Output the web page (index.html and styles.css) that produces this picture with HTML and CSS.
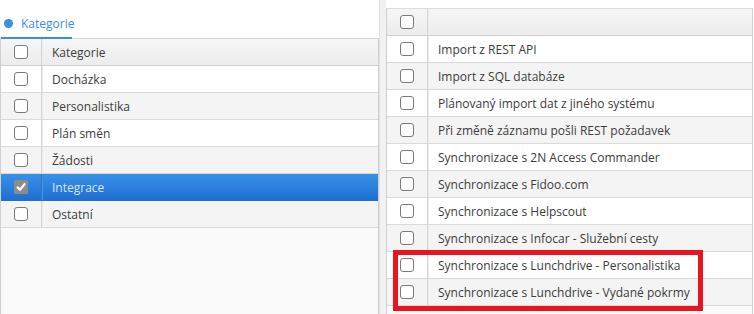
FILE: index.html
```html
<!DOCTYPE html>
<html lang="cs">
<head>
<meta charset="utf-8">
<link rel="stylesheet" href="styles.css">
</head>
<body>
<div class="layout">
  <section class="left">
    <div class="tabs">
      <div class="tab"><span class="dot"></span>Kategorie</div>
    </div>
    <div class="grid">
      <div class="row head"><div class="cb"><span class="box"></span></div><div class="txt">Kategorie</div></div>
      <div class="row"><div class="cb"><span class="box"></span></div><div class="txt">Docházka</div></div>
      <div class="row alt"><div class="cb"><span class="box"></span></div><div class="txt">Personalistika</div></div>
      <div class="row"><div class="cb"><span class="box"></span></div><div class="txt">Plán směn</div></div>
      <div class="row alt"><div class="cb"><span class="box"></span></div><div class="txt">Žádosti</div></div>
      <div class="row sel"><div class="cb"><span class="box checked"><svg viewBox="0 0 12 12" width="12" height="12"><path d="M2.6 6.4 L5 8.8 L9.6 3.2" fill="none" stroke="#fff" stroke-width="2.2" stroke-linecap="round" stroke-linejoin="round"/></svg></span></div><div class="txt">Integrace</div></div>
      <div class="row alt"><div class="cb"><span class="box"></span></div><div class="txt">Ostatní</div></div>
    </div>
  </section>
  <div class="splitter"></div>
  <section class="right">
    <div class="grid rgrid">
      <div class="row head"><div class="cb"><span class="box"></span></div><div class="txt"></div></div>
      <div class="row"><div class="cb"><span class="box"></span></div><div class="txt">Import z REST API</div></div>
      <div class="row alt"><div class="cb"><span class="box"></span></div><div class="txt">Import z SQL databáze</div></div>
      <div class="row"><div class="cb"><span class="box"></span></div><div class="txt">Plánovaný import dat z jiného systému</div></div>
      <div class="row alt"><div class="cb"><span class="box"></span></div><div class="txt">Při změně záznamu pošli REST požadavek</div></div>
      <div class="row"><div class="cb"><span class="box"></span></div><div class="txt">Synchronizace s 2N Access Commander</div></div>
      <div class="row alt"><div class="cb"><span class="box"></span></div><div class="txt">Synchronizace s Fidoo.com</div></div>
      <div class="row"><div class="cb"><span class="box"></span></div><div class="txt">Synchronizace s Helpscout</div></div>
      <div class="row alt"><div class="cb"><span class="box"></span></div><div class="txt">Synchronizace s Infocar - Služební cesty</div></div>
      <div class="row"><div class="cb"><span class="box"></span></div><div class="txt">Synchronizace s Lunchdrive - Personalistika</div></div>
      <div class="row alt"><div class="cb"><span class="box"></span></div><div class="txt">Synchronizace s Lunchdrive - Vydané pokrmy</div></div>
      <div class="highlight"></div>
    </div>
  </section>
</div>
</body>
</html>
```
FILE: styles.css
```css
html, body {
  margin: 0;
  padding: 0;
  background: #fff;
}
body {
  font-family: "Open Sans", "Liberation Sans", sans-serif;
  font-size: 12px;
  color: #3c3c3c;
}
.layout {
  display: flex;
  height: 314px;
  overflow: hidden;
}
.left {
  width: 379px;
  display: flex;
  flex-direction: column;
}
.tabs {
  height: 38px;
  border-bottom: 1px solid #d6d6d6;
  display: flex;
  align-items: flex-end;
}
.tab {
  width: 71px;
  margin-left: 1px;
  height: 36px;
  box-sizing: border-box;
  border-bottom: 2px solid #3a8ee6;
  margin-bottom: -1px;
  color: #3a8ee6;
  display: flex;
  align-items: center;
  padding-left: 3px;
  padding-top: 6px;
  font-size: 12px;
}
.dot {
  flex: none;
  width: 9px;
  height: 9px;
  border-radius: 50%;
  background: #3a8ee6;
  margin-right: 8px;
}
.grid {
  flex: 1;
  background: #fafafa;
  border-left: 1px solid #d0d0d0;
  border-right: 1px solid #d0d0d0;
  display: flex;
  flex-direction: column;
}
.row {
  display: flex;
  height: 26px;
  border-bottom: 1px solid #d9d9d9;
  background: #fff;
  flex: none;
}
.row.alt {
  background: #f4f4f4;
}
.row.head {
  background: linear-gradient(#f6f6f6, #ececec);
  border-bottom-color: #d0d0d0;
}
.row.sel {
  background: linear-gradient(#3a90e6, #1f6ed2);
  border-bottom-color: #2a6fc4;
  color: #d6e6f8;
}
.cb {
  width: 40px;
  flex: none;
  display: flex;
  align-items: center;
  justify-content: center;
  border-right: 1px solid #d4d4d4;
  box-shadow: 1px 0 0 #ececec;
}
.row.sel .cb {
  border-right-color: #2b72c8;
  box-shadow: 1px 0 0 #4a95e0;
}
.box {
  width: 12px;
  height: 12px;
  border: 1px solid #7a7a7a;
  border-radius: 3px;
  background: #fff;
  display: flex;
  align-items: center;
  justify-content: center;
}
.box.checked {
  background: #8c8c8c;
  border-color: #8c8c8c;
  border-radius: 1px;
}
.txt {
  padding-left: 10px;
  display: flex;
  align-items: center;
  white-space: nowrap;
}
.splitter {
  width: 7px;
  background: #f2f2f2;
  border-left: 1px solid #e0e0e0;
  box-sizing: border-box;
  flex: none;
}
.right {
  width: 367px;
  flex: none;
  padding-top: 8px;
  display: flex;
  flex-direction: column;
}
.rgrid {
  position: relative;
  border-top: 1px solid #dcdcdc;
  background: #fafafa;
}
.highlight {
  position: absolute;
  left: 6px;
  top: 241px;
  width: 300px;
  height: 51px;
  border: 5px solid #e8141e;
}
```
